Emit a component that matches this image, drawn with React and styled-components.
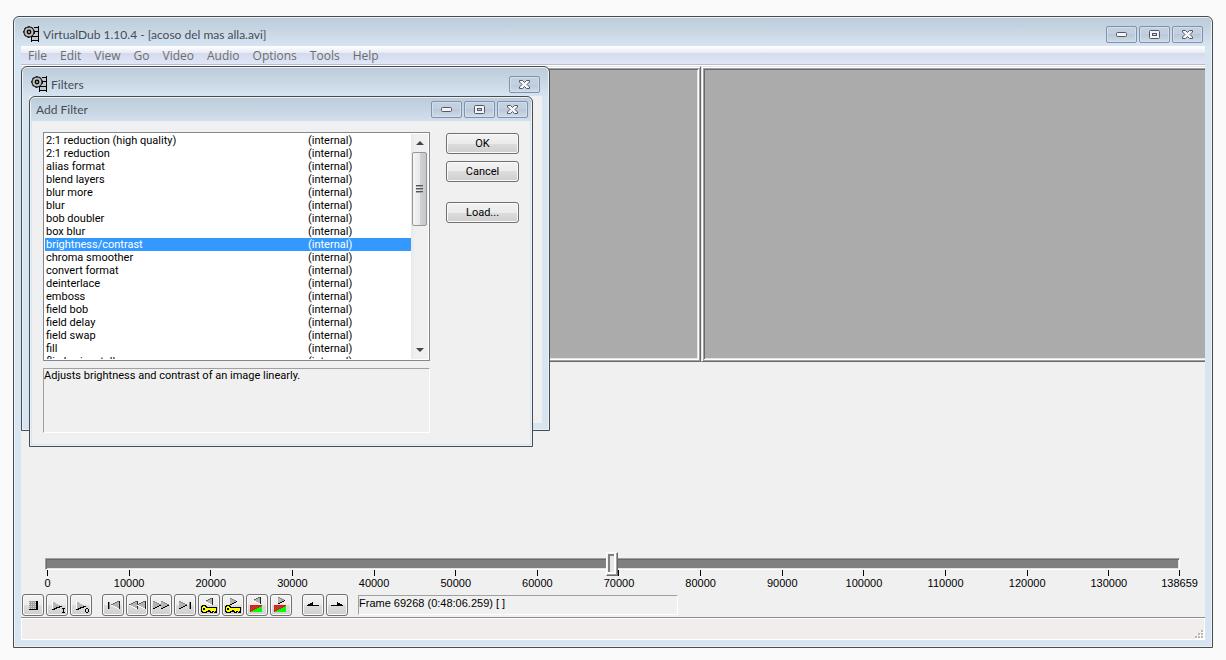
import React, { useState } from "react";
import styled, { createGlobalStyle, css } from "styled-components";

const menus = [
  "File",
  "Edit",
  "View",
  "Go",
  "Video",
  "Audio",
  "Options",
  "Tools",
  "Help",
];

const filters = [
  "2:1 reduction (high quality)",
  "2:1 reduction",
  "alias format",
  "blend layers",
  "blur more",
  "blur",
  "bob doubler",
  "box blur",
  "brightness/contrast",
  "chroma smoother",
  "convert format",
  "deinterlace",
  "emboss",
  "field bob",
  "field delay",
  "field swap",
  "fill",
  "flip horizontally",
];

const lastFrame = 138659;
const tickStep = 10000;
const ticks = [];
for (let f = 0; f < lastFrame; f += tickStep) {
  ticks.push({ frame: f, span: Math.min(tickStep, lastFrame - f) });
}
ticks.push({ frame: lastFrame, span: 0 });

const GlobalStyle = createGlobalStyle`
  * {
    box-sizing: border-box;
  }
  body {
    margin: 0;
    background: #fafafa;
  }
  button, input {
    font: inherit;
    margin: 0;
  }
`;

const titleFont = `Lato, "Open Sans", sans-serif`;
const menuFont = `"Open Sans", "Noto Sans", sans-serif`;
const dialogFont = `Roboto, "Noto Sans", sans-serif`;

/* ---------- icons ---------- */

function AppIcon() {
  return (
    <svg width="16" height="16" viewBox="0 0 16 16">
      <g shapeRendering="crispEdges">
        <path d="M9 2h6v13H9z" fill="#c4c8cc" />
        <path d="M11 1h5v1h-5zM11 5h5v1h-5zM8 10h8v1H8zM8 14h8v1H8zM15 0h1v16h-1zM8 10h1v6H8z" />
      </g>
      <circle cx="6" cy="6" r="5" fill="#bdbdbd" stroke="#000" strokeWidth="1" />
      <circle
        cx="6"
        cy="6"
        r="5.500"
        fill="none"
        stroke="#000"
        strokeWidth="1"
        strokeDasharray="2 2"
      />
      <circle cx="6" cy="6" r="1.800" fill="#8f8f8f" stroke="#000" strokeWidth="1.200" />
    </svg>
  );
}

function MinimizeGlyph() {
  return (
    <svg width="11" height="5" viewBox="0 0 11 5">
      <rect x="0.5" y="0.5" width="10" height="4" rx="1" fill="#f4f4f4" stroke="#53566b" />
    </svg>
  );
}

function MaximizeGlyph() {
  return (
    <svg width="11" height="9" viewBox="0 0 11 9">
      <rect x="0.5" y="0.5" width="10" height="8" rx="1" fill="#f4f4f4" stroke="#53566b" />
      <rect x="3.5" y="3.5" width="4" height="2" fill="#c5d2e2" stroke="#53566b" />
    </svg>
  );
}

function CloseGlyph() {
  return (
    <svg width="11" height="9" viewBox="0 0 11 9">
      <path
        d="M.5 .5h3l2 2 2-2h3V2L8 4.500 10.500 7v1.500h-3l-2-2-2 2h-3V7L3 4.500.5 2z"
        fill="#f8f8f8"
        stroke="#53566b"
        strokeLinejoin="round"
      />
    </svg>
  );
}

// left facing triangle, mirrored with `flip` about x = 10
function Wedge({ x, y = 6, size = 8, flip }) {
  const half = size / 2;
  const shape = (
    <>
      <path d={`M${x} ${y + half}l${size} ${-half}v${size}z`} fill="#b4b4b4" />
      <path
        d={`M${x} ${y + half}l${size} ${-half}`}
        stroke={flip ? "#8a8a8a" : "#666"}
        fill="none"
      />
      <path d={`M${x} ${y + half}l${size} ${half}`} stroke={flip ? "#000" : "#fff"} fill="none" />
      {!flip && <path d={`M${x + size} ${y}v${size}`} stroke="#222" fill="none" />}
    </>
  );
  return flip ? <g transform="matrix(-1 0 0 1 20 0)">{shape}</g> : shape;
}

function PlayShape() {
  return (
    <>
      <path d="M5 6v9l9-4z" fill="#b4b4b4" />
      <path d="M5 6h1v8H5z" fill="#fff" />
      <path d="M5 14h2v-1h2v-1h3v-1h3v1h-2v1h-3v1H8v1H5z" />
    </>
  );
}

function KeyShape() {
  return (
    <>
      <path d="M3 10h4v1h1v1h10v6h-3v-1h-1v1h-3v-1H8v1H3v-1H2v-6h1z" />
      <path d="M4 11h2v1h1v1h10v3h-1v1h-1v-1h-2v1h-1v-1H7v1H4v-1H3v-4h1z" fill="#ff0" />
      <path d="M4 13h2v2H4zM9 15h2v1H9z" />
    </>
  );
}

function SceneShape() {
  return (
    <>
      <path d="M3 10h12v7H3z" fill="#0f0" />
      <path d="M3 10h12v1L3 17z" fill="#f01010" />
      <path
        d="M4 11h1v1H4zM6 11h1v1H6zM8 11h1v1H8zM10 11h1v1h-1zM5 12h1v1H5zM7 12h1v1H7zM9 12h1v1H9zM4 13h1v1H4zM6 13h1v1H6zM5 14h1v1H5z"
        fill="#8c5a50"
      />
    </>
  );
}

const icons = {
  stop: (
    <>
      <path d="M6 6h9v9H6z" fill="#a0a0a0" />
      <path d="M6 7h8M6 9h8M6 11h8M6 13h8" stroke="#d8d8d8" strokeDasharray="1 1" />
      <path d="M13 6h2v9H6v-1h7z" />
    </>
  ),
  playInput: (
    <>
      <PlayShape />
      <path d="M15 13h3v1h-1v3h1v1h-3v-1h1v-3h-1z" />
    </>
  ),
  playOutput: (
    <>
      <PlayShape />
      <path d="M15 13h2v1h1v3h-1v1h-2v-1h-1v-3h1zM15 14v3h2v-3z" fillRule="evenodd" />
    </>
  ),
  start: (
    <>
      <path d="M5 7h1v7H5z" />
      <path d="M6 7h1v7H6z" fill="#888" />
      <Wedge x={8} />
    </>
  ),
  back: (
    <>
      <Wedge x={2} />
      <Wedge x={10} />
    </>
  ),
  forward: (
    <>
      <Wedge x={10} flip />
      <Wedge x={2} flip />
    </>
  ),
  end: (
    <>
      <Wedge x={8} flip />
      <path d="M14 7h1v7h-1z" fill="#888" />
      <path d="M15 7h1v7h-1z" />
    </>
  ),
  prevKey: (
    <>
      <Wedge x={6} y={3} size={7} />
      <KeyShape />
    </>
  ),
  nextKey: (
    <>
      <Wedge x={6} y={3} size={7} flip />
      <KeyShape />
    </>
  ),
  prevScene: (
    <>
      <Wedge x={6} y={2} size={7} />
      <SceneShape />
    </>
  ),
  nextScene: (
    <>
      <Wedge x={6} y={2} size={7} flip />
      <SceneShape />
    </>
  ),
  markIn: <path d="M4 11v-1h1V9h2V8h2V7h1v3h6v1z" />,
  markOut: <path d="M16 11v-1h-1V9h-2V8h-2V7h-1v3H4v1z" />,
};

function ToolIcon({ name }) {
  return (
    <svg width="20" height="20" viewBox="0 0 20 20" shapeRendering="crispEdges">
      {icons[name]}
    </svg>
  );
}

const toolGroups = [
  [
    ["stop", "Stop"],
    ["playInput", "Play input"],
    ["playOutput", "Play output"],
  ],
  [
    ["start", "Go to start"],
    ["back", "Step back"],
    ["forward", "Step forward"],
    ["end", "Go to end"],
    ["prevKey", "Previous key frame"],
    ["nextKey", "Next key frame"],
    ["prevScene", "Previous scene"],
    ["nextScene", "Next scene"],
  ],
  [
    ["markIn", "Mark in"],
    ["markOut", "Mark out"],
  ],
];

/* ---------- window frames ---------- */

function Caption({ label, icon, controls, tight }) {
  const glyphs = {
    Minimize: <MinimizeGlyph />,
    Maximize: <MaximizeGlyph />,
    Close: <CloseGlyph />,
  };
  return (
    <TitleBar $tight={tight}>
      {icon && <AppIcon />}
      <Title>{label}</Title>
      <Controls>
        {controls.map((c) => (
          <CaptionButton key={c} aria-label={`${c} ${label}`}>
            {glyphs[c]}
          </CaptionButton>
        ))}
      </Controls>
    </TitleBar>
  );
}

function AddFilterDialog() {
  const [selected, setSelected] = useState("brightness/contrast");

  return (
    <AddFilterWindow role="dialog" aria-label="Add Filter">
      <Caption label="Add Filter" controls={["Minimize", "Maximize", "Close"]} tight />
      <DialogBody>
        <DialogColumn>
          <ListBox>
            <Options role="listbox" aria-label="Filters available">
              {filters.map((f) => (
                <Option
                  key={f}
                  role="option"
                  aria-selected={f === selected}
                  $selected={f === selected}
                  onClick={() => setSelected(f)}
                >
                  <span>{f}</span>
                  <span>(internal)</span>
                </Option>
              ))}
            </Options>
            <ScrollBar aria-hidden="true">
              <ScrollArrow />
              <ScrollThumb>
                <i />
                <i />
                <i />
              </ScrollThumb>
              <ScrollGap />
              <ScrollArrow $down />
            </ScrollBar>
          </ListBox>
          <Description>Adjusts brightness and contrast of an image linearly.</Description>
        </DialogColumn>
        <ButtonColumn>
          <PushButton>OK</PushButton>
          <PushButton>Cancel</PushButton>
          <PushButton $apart>Load...</PushButton>
        </ButtonColumn>
      </DialogBody>
    </AddFilterWindow>
  );
}

export default function App() {
  const [frame, setFrame] = useState(69268);

  return (
    <Desktop>
      <GlobalStyle />
      <MainWindow>
        <Caption
          label="VirtualDub 1.10.4 - [acoso del mas alla.avi]"
          icon
          controls={["Minimize", "Maximize", "Close"]}
        />
        <Client>
          <MenuBar>
            {menus.map((m) => (
              <MenuItem key={m}>{m}</MenuItem>
            ))}
          </MenuBar>
          <Panes>
            <Pane />
            <Pane />
          </Panes>
          <Workspace />
          <Position>
            <PositionSlider
              type="range"
              aria-label="Frame position"
              min="0"
              max={lastFrame}
              value={frame}
              onChange={(e) => setFrame(Number(e.target.value))}
            />
            <Scale>
              {ticks.map((t) => (
                <Tick key={t.frame} $span={t.span}>
                  <span>{t.frame}</span>
                </Tick>
              ))}
            </Scale>
          </Position>
          <ToolBar>
            {toolGroups.map((group, i) => (
              <ToolGroup key={i}>
                {group.map(([name, label]) => (
                  <ToolButton key={name} aria-label={label}>
                    <ToolIcon name={name} />
                  </ToolButton>
                ))}
              </ToolGroup>
            ))}
            <FrameInfo>Frame 69268 (0:48:06.259) [ ]</FrameInfo>
          </ToolBar>
          <StatusBar>
            <svg width="9" height="9" viewBox="0 0 9 9" shapeRendering="crispEdges">
              <path
                d="M7 1h2v2H7zM4 4h2v2H4zM7 4h2v2H7zM1 7h2v2H1zM4 7h2v2H4zM7 7h2v2H7z"
                fill="#fff"
              />
              <path
                d="M6 0h2v2H6zM3 3h2v2H3zM6 3h2v2H6zM0 6h2v2H0zM3 6h2v2H3zM6 6h2v2H6z"
                fill="#bab7b5"
              />
            </svg>
          </StatusBar>

          <FiltersWindow role="dialog" aria-label="Filters">
            <Caption label="Filters" icon controls={["Close"]} />
            <FiltersBody />
          </FiltersWindow>
          <AddFilterDialog />
        </Client>
      </MainWindow>
    </Desktop>
  );
}

const Desktop = styled.div`
  display: flex;
  min-height: 100vh;
  padding: 16px 13px 12px;
`;

const frame = css`
  display: flex;
  flex-direction: column;
  border: 1px solid #4b4b4b;
  background: linear-gradient(#bccbd9, #d7e4f1 30px);
  box-shadow: inset 0 0 0 1px #e9f1f9;
`;

const MainWindow = styled.div`
  ${frame}
  flex: 1;
  min-width: 0;
  padding: 0 7px 7px;
  border-radius: 6px 6px 0 0;
`;

const FiltersWindow = styled.div`
  ${frame}
  position: absolute;
  left: 0;
  top: 20px;
  width: 529px;
  height: 365px;
  padding: 0 7px 7px;
  border-radius: 6px 6px 0 0;
`;

const FiltersBody = styled.div`
  flex: 1;
  background: #f0f0f0;
`;

const AddFilterWindow = styled.div`
  ${frame}
  position: absolute;
  left: 8px;
  top: 50px;
  width: 504px;
  padding: 0 2px 2px;
  border-radius: 6px 6px 0 0;
`;

const TitleBar = styled.header`
  display: flex;
  align-items: flex-start;
  height: ${(p) => (p.$tight ? "24px" : "29px")};
  padding: ${(p) => (p.$tight ? "4px 2px 0 4px" : "9px 2px 0")};
  font-family: ${titleFont};
  font-size: 12px;
  color: #454d57;

  > svg {
    margin-right: 4px;
  }
`;

const Title = styled.h1`
  margin: 0;
  font: inherit;
  line-height: 18px;
  white-space: nowrap;
`;

const Controls = styled.div`
  display: flex;
  gap: 2px;
  margin-left: auto;
`;

const CaptionButton = styled.button`
  display: flex;
  align-items: center;
  justify-content: center;
  width: 31px;
  height: 17px;
  padding: 0;
  border: 1px solid #8390ae;
  border-radius: 2px;
  background: linear-gradient(#c3d0df 50%, #b9c8d9 50%, #cddbe9);
  box-shadow: inset 0 0 0 1px #d3dfeb;
`;

const Client = styled.main`
  position: relative;
  flex: 1;
  display: flex;
  flex-direction: column;
  min-width: 0;
  background: #f0f0f0;
  font-family: ${dialogFont};
  font-size: 11px;
  color: #000;
`;

const MenuBar = styled.nav`
  display: flex;
  gap: 13px;
  height: 20px;
  padding-left: 7px;
  background: linear-gradient(#fff, #e6ebf4 7px, #d3daed 7px, #e1e6f6 18px, #b6bccc 18px, #b6bccc 19px, #fff 19px);
`;

const MenuItem = styled.button`
  padding: 0;
  border: 0;
  background: none;
  font-family: ${menuFont};
  font-size: 12px;
  line-height: 20px;
  color: #6d6d6d;
`;

const Panes = styled.div`
  display: flex;
  overflow: hidden;
`;

// raised outer edge around a sunken inner one
const Pane = styled.div`
  flex: 0 0 680px;
  height: 296px;
  border: 1px solid;
  border-color: #e3e3e3 #696969 #696969 #e3e3e3;
  background: #ababab;
  box-shadow: inset 1px 1px #fff, inset -1px -1px #a0a0a0, inset 2px 2px #a0a0a0,
    inset -2px -2px #fff, inset 3px 3px #696969, inset -3px -3px #e3e3e3;
`;

const Workspace = styled.div`
  flex: 1;
`;

const Position = styled.div`
  display: flex;
  flex-direction: column;
  margin: 0 25px 4px 24px;
`;

const PositionSlider = styled.input`
  appearance: none;
  position: relative;
  z-index: 1;
  height: 24px;
  margin-bottom: -6px;
  background: none;

  &::-webkit-slider-runnable-track {
    height: 12px;
    border: 1px solid;
    border-color: #a0a0a0 #fff #fff #a0a0a0;
    background: #808080;
    box-shadow: inset 1px 1px #696969, inset -1px -1px #e3e3e3;
  }

  &::-webkit-slider-thumb {
    appearance: none;
    width: 12px;
    height: 24px;
    margin-top: -7px;
    border: 1px solid;
    border-color: #fff #696969 #696969 #fff;
    background: #e8e8e8;
    box-shadow: inset -1px -1px #a0a0a0, inset 1px 1px #f0f0f0, inset -3px -3px #fff,
      inset 3px 3px #808080;
  }
`;

const Scale = styled.div`
  display: flex;
  padding: 0 0 0 2px;
  font-family: "Liberation Sans", Arial, sans-serif;
`;

// the label is centred on the tick, which stands on the left edge of its span
const Tick = styled.div`
  flex: ${(p) => p.$span} 0 0;
  min-width: 1px;

  &::before {
    content: "";
    display: block;
    width: 1px;
    height: 6px;
    background: #000;
  }

  span {
    display: flex;
    justify-content: center;
    width: 1px;
    line-height: 14px;
    white-space: nowrap;
  }
`;

const ToolBar = styled.div`
  display: flex;
  padding: 0 0 1px 1px;
`;

const ToolGroup = styled.div`
  display: flex;
  gap: 2px;
  margin-right: 10px;
`;

const buttonFace = css`
  display: flex;
  align-items: center;
  justify-content: center;
  padding: 0;
  border: 1px solid #707070;
  border-radius: 3px;
  background: linear-gradient(#f3f3f3, #ebebeb 50%, #dddddd 50%, #cfcfcf);
  box-shadow: inset 0 0 0 1px #fafafa;
  color: #000;
`;

const ToolButton = styled.button`
  ${buttonFace}
  width: 22px;
  height: 22px;
`;

const sunken = css`
  border: 1px solid;
  border-color: #a0a0a0 #fff #fff #a0a0a0;
`;

const FrameInfo = styled.output`
  ${sunken}
  width: 320px;
  height: 20px;
  margin-top: 1px;
  font-family: "Liberation Sans", Arial, sans-serif;
  line-height: 14px;
  white-space: nowrap;
`;

const StatusBar = styled.footer`
  display: flex;
  align-items: flex-end;
  justify-content: flex-end;
  height: 23px;
  padding: 1px;
  border-top: 1px solid #8e8e8e;
  background: #f1edec;
  box-shadow: inset 0 0 0 1px #fff;
`;

const DialogBody = styled.div`
  display: flex;
  gap: 16px;
  padding: 11px;
  background: #f0f0f0;
`;

const DialogColumn = styled.div`
  display: flex;
  flex-direction: column;
  gap: 7px;
  width: 387px;
`;

const ListBox = styled.div`
  display: flex;
  height: 229px;
  padding: 1px;
  border: 1px solid #828790;
  background: #fff;
`;

const Options = styled.ul`
  flex: 1;
  margin: 0;
  padding: 0;
  overflow: hidden;
  list-style: none;
`;

const Option = styled.li`
  display: grid;
  grid-template-columns: 262px 1fr;
  height: 13px;
  padding-left: 1px;
  line-height: 14px;
  white-space: nowrap;
  color: ${(p) => (p.$selected ? "#fff" : "#000")};
  background: ${(p) => (p.$selected ? "#3399ff" : "none")};
`;

const ScrollBar = styled.div`
  display: flex;
  flex-direction: column;
  align-items: center;
  width: 17px;
  background: linear-gradient(to right, #e8e8e8, #f0f0f0 4px, #f0f0f0);
`;

const ScrollArrow = styled.div`
  display: flex;
  align-items: center;
  justify-content: center;
  height: 18px;

  &::before {
    content: "";
    border: 4px solid transparent;
    border-width: ${(p) => (p.$down ? "4px 4px 0" : "0 4px 4px")};
    border-${(p) => (p.$down ? "top" : "bottom")}-color: #444;
  }
`;

const ScrollThumb = styled.div`
  display: flex;
  flex-direction: column;
  align-items: center;
  justify-content: center;
  gap: 1px;
  width: 15px;
  height: 74px;
  border: 1px solid #979797;
  border-radius: 2px;
  background: linear-gradient(to right, #f5f5f5, #e9e9eb 50%, #d1d2d4 50%, #c6c7ca);

  i {
    width: 7px;
    height: 2px;
    border-top: 1px solid #555;
    background: #aaa;
  }
`;

const ScrollGap = styled.div`
  flex: 1;
`;

const Description = styled.p`
  ${sunken}
  height: 65px;
  margin: 0;
  line-height: 14px;
`;

const ButtonColumn = styled.div`
  display: flex;
  flex-direction: column;
  gap: 7px;
  padding-top: 1px;
`;

const PushButton = styled.button`
  ${buttonFace}
  width: 73px;
  height: 21px;
  margin-top: ${(p) => (p.$apart ? "13px" : "0")};
`;
